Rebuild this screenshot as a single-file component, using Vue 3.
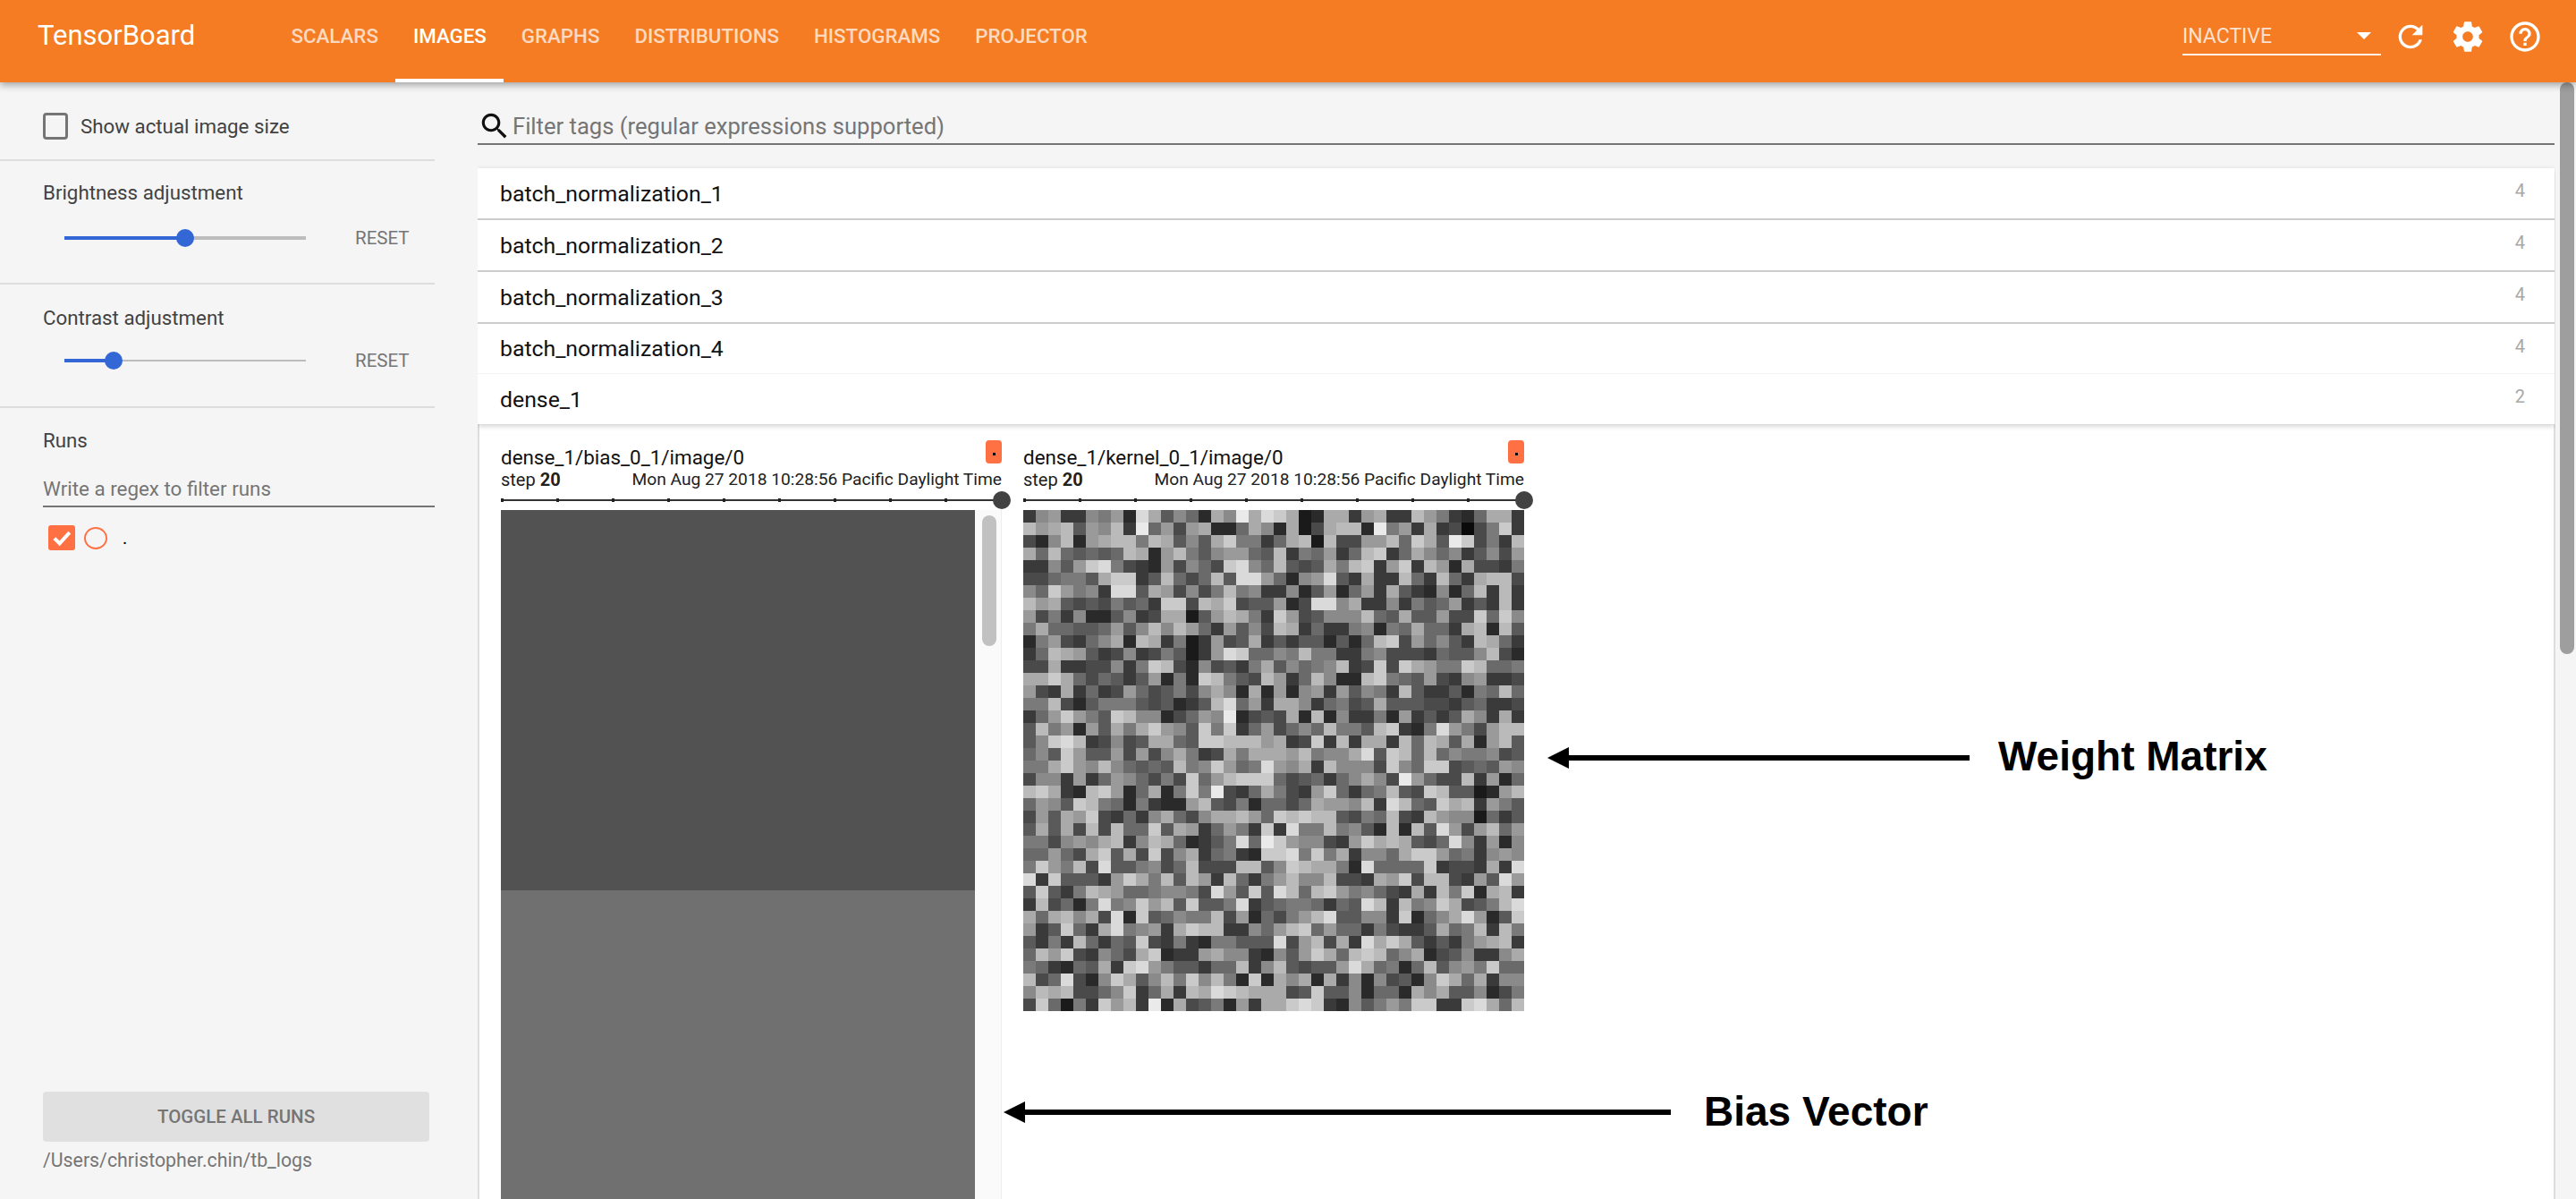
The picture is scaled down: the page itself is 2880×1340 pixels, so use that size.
<script setup>
const tabs = ['SCALARS', 'IMAGES', 'GRAPHS', 'DISTRIBUTIONS', 'HISTOGRAMS', 'PROJECTOR'];
const tags = [
  { name: 'batch_normalization_1', count: 4 },
  { name: 'batch_normalization_2', count: 4 },
  { name: 'batch_normalization_3', count: 4 },
  { name: 'batch_normalization_4', count: 4 },
  { name: 'dense_1', count: 2 }
];

// kernel image, one hex digit per cell (40 x 40)
const rows = [
  '3893387 92DA5862A8EADCA12AA39A33B97326AA3',
  'B9AB5 98B3E6949A226A82A14ABB2E793A3404 7C3',
  '428B29ABB7BA585AC7736AB1B449 9B6CA5EC4 73BC',
  'A6B65656BA29B7589965B3769 36BC36A8 6835849',
  '33859CD743294864CD86B545A7BC39C3B92A4 43',
  '446775ACC35B646B5DD96289D53A33B63B63AB B4',
  '86C9783DD5A94847B783382592693A53282 6B3B3',
  'B9A54547563CC4BAC45592 4DD8A33837569353B3',
  '947382258 34AA159BA73C94588 8B65A5594 4C6C8',
  '7A66556958B8B96 395 84BA363378276A663AB2B52',
  '27943 68A2BA37139 45A35355252 6BC496853BA63',
  '36BA95348 34751 39DC66 87B77337 84443655 8B42',
  '44A334483 7CB428 453 7A58678B34C4CA977CB667',
  'AACA64653 592 72CB754B936B822BC76594389334',
  '943A3634964574 8A82A29289395873B53352 76B6',
  '77B42577 754523 5BD693AA8367 45A555443 56334',
  '369C975CB8824 69 8E2454A2B2833729353 5A83A39',
  '5B7929 5A7AC985C7C3694 68 6B775BC3 27D974 9BB',
  '58CDB3484 5AA65CCBBB9A34C3B3AA3B6BA5A29B5',
  '685C95594 948A734A7AAA9B788AD5CB6B687784 5',
  '77AC98B8656 5B78C9 67D98A3B888 4C86CC456 598',
  '48839369864 74C69BCCC6456 368A84E96 44B39263',
  'BCA32BC926A27C7E436A74 39C6 367B54CB551 29B',
  '698 5CB76273 229B547 266 46A998B3DB65CAB3975',
  '495A9C43638A648AAB96CBCBB5476B43B9881 635',
  '5A5A4B4B66C5A9369 73C3D77B7852B2B5D949B69',
  '77489 8AB38BA623 57D6EC98843 9CABA546D8 39 28',
  '6696 4AC5A4C48A3673 2CCD7C7A38 86ACC967 3898 9',
  '7C97B4D5578 46B444BB58CBAA72D66 66C3443A3D',
  'D3C5553 9CA7B5B93B6 379B88B443A9C4BB4 395D9',
  '5C537BA96678 87 4D95C5DB6BC9786 43A3B7C2AB3',
  '3B4627D78C9B5C557D356776 365DB3B78CA457BD',
  'A6AB8A4D2C56877B492 6479BD5588 3C268AD925C',
  '935C63AD7893ACBB3386 9BC696637 4335A67B3B7',
  '5373B6365C43732775 55D49B4A3DACA535379AB3',
  '6B9C43864AC233 9A8832 859CA6BCB68A2458338A',
  '76326 5A3CD97553 66B38B5455 9DA67 26B5897C66',
  'B46D428CA58B7C8B72C2A8A2A3828452 8CA6A388',
  '8BAB44 68C36A3BADCBAAA45C55 8266 2A8A5582 47',
  '4C6173C9B3E2A457293AACDC3285 797CC33CDA6B'
];

const cells = rows.flatMap((row) =>
  row.replace(/\s/g, '').padEnd(40, '7').slice(0, 40).split('').map((ch) => {
    const v = parseInt(ch, 16) * 16 + 10;
    return `rgb(${v},${v},${v})`;
  })
);

const refreshPath = 'M17.65 6.35C16.2 4.9 14.21 4 12 4c-4.42 0-7.99 3.58-7.99 8s3.57 8 7.99 8c3.73 0 6.84-2.55 7.73-6h-2.08c-.82 2.33-3.04 4-5.65 4-3.31 0-6-2.69-6-6s2.69-6 6-6c1.66 0 3.14.69 4.22 1.78L13 11h7V4l-2.35 2.35z';
const gearPath = 'M19.43 12.98c.04-.32.07-.64.07-.98s-.03-.66-.07-.98l2.11-1.65c.19-.15.24-.42.12-.64l-2-3.46c-.12-.22-.39-.3-.61-.22l-2.49 1c-.52-.4-1.08-.73-1.69-.98l-.38-2.65C14.46 2.18 14.25 2 14 2h-4c-.25 0-.46.18-.49.42l-.38 2.65c-.61.25-1.17.59-1.69.98l-2.49-1c-.23-.09-.49 0-.61.22l-2 3.46c-.13.22-.07.49.12.64l2.11 1.65c-.04.32-.07.65-.07.98s.03.66.07.98l-2.11 1.65c-.19.15-.24.42-.12.64l2 3.46c.12.22.39.3.61.22l2.49-1c.52.4 1.08.73 1.69.98l.38 2.65c.03.24.24.42.49.42h4c.25 0 .46-.18.49-.42l.38-2.65c.61-.25 1.17-.59 1.69-.98l2.49 1c.23.09.49 0 .61-.22l2-3.46c.12-.22.07-.49-.12-.64l-2.11-1.65zM12 15.5c-1.93 0-3.5-1.57-3.5-3.5s1.57-3.5 3.5-3.5 3.5 1.57 3.5 3.5-1.57 3.5-3.5 3.5z';
const helpPath = 'M11 18h2v-2h-2v2zm1-16C6.48 2 2 6.48 2 12s4.48 10 10 10 10-4.48 10-10S17.52 2 12 2zm0 18c-4.41 0-8-3.59-8-8s3.59-8 8-8 8 3.59 8 8-3.59 8-8 8zm0-14c-2.21 0-4 1.79-4 4h2c0-1.1.9-2 2-2s2 .9 2 2c0 2-3 1.75-3 5h2c0-2.25 3-2.5 3-5 0-2.21-1.79-4-4-4z';
const searchPath = 'M15.5 14h-.79l-.28-.27C15.41 12.59 16 11.11 16 9.5 16 5.91 13.09 3 9.5 3S3 5.91 3 9.5 5.91 16 9.5 16c1.61 0 3.09-.59 4.23-1.57l.27.28v.79l5 4.99L20.49 19l-4.99-5zm-6 0C7.01 14 5 11.99 5 9.5S7.01 5 9.5 5 14 7.01 14 9.5 11.99 14 9.5 14z';
</script>

<template>
  <div class="app">
    <header class="topbar">
      <div class="logo">TensorBoard</div>
      <nav class="tabs">
        <div v-for="tab in tabs" :key="tab" class="tab" :class="{ active: tab === 'IMAGES' }">{{ tab }}</div>
      </nav>
      <div class="select">
        <span>INACTIVE</span>
        <i class="caret"></i>
      </div>
      <div class="icons">
        <svg viewBox="0 0 24 24" width="40" height="40"><path :d="refreshPath" /></svg>
        <svg viewBox="0 0 24 24" width="40" height="40"><path :d="gearPath" /></svg>
        <svg viewBox="0 0 24 24" width="40" height="40"><path :d="helpPath" /></svg>
      </div>
    </header>

    <div class="body">
      <aside class="sidebar">
        <div class="section show">
          <span class="box"></span>
          <span class="show-label">Show actual image size</span>
        </div>

        <div class="section adjust">
          <div class="label">Brightness adjustment</div>
          <div class="slider-row">
            <div class="range thick">
              <div class="range-fill bright"></div>
              <div class="range-thumb bright-thumb"></div>
            </div>
            <span class="reset">RESET</span>
          </div>
        </div>

        <div class="section adjust contrast">
          <div class="label">Contrast adjustment</div>
          <div class="slider-row">
            <div class="range">
              <div class="range-fill cont"></div>
              <div class="range-thumb cont-thumb"></div>
            </div>
            <span class="reset">RESET</span>
          </div>
        </div>

        <div class="runs">
          <div class="label">Runs</div>
          <div class="runs-filter">Write a regex to filter runs</div>
          <div class="run-item">
            <span class="run-check">
              <svg viewBox="0 0 24 24" width="28" height="28"><path d="M5 12.5l5 5L19.5 7" fill="none" stroke="#fff" stroke-width="3.4" /></svg>
            </span>
            <span class="run-circle"></span>
            <span class="run-name">.</span>
          </div>
        </div>

        <div class="bottom">
          <div class="toggle">TOGGLE ALL RUNS</div>
          <div class="logdir">/Users/christopher.chin/tb_logs</div>
        </div>
      </aside>

      <main class="main">
        <div class="filter">
          <svg viewBox="0 0 24 24" width="38" height="38"><path :d="searchPath" /></svg>
          <span>Filter tags (regular expressions supported)</span>
        </div>

        <div class="tags">
          <div v-for="tag in tags" :key="tag.name" class="tag">
            <span class="tag-name">{{ tag.name }}</span>
            <span class="tag-count">{{ tag.count }}</span>
          </div>
        </div>

        <div class="panel">
          <div class="card">
            <div class="card-head">
              <div class="card-title">dense_1/bias_0_1/image/0</div>
              <div class="chip"><i></i></div>
            </div>
            <div class="meta">
              <span class="meta-step">step <b>20</b></span>
              <span>Mon Aug 27 2018 10:28:56 Pacific Daylight Time</span>
            </div>
            <div class="step"><div class="step-thumb"></div></div>
            <div class="scroller">
              <div class="bias">
                <div class="bias-a"></div>
                <div class="bias-b"></div>
              </div>
              <div class="track"><div class="track-thumb"></div></div>
            </div>
          </div>

          <div class="card">
            <div class="card-head">
              <div class="card-title">dense_1/kernel_0_1/image/0</div>
              <div class="chip"><i></i></div>
            </div>
            <div class="meta">
              <span class="meta-step">step <b>20</b></span>
              <span>Mon Aug 27 2018 10:28:56 Pacific Daylight Time</span>
            </div>
            <div class="step"><div class="step-thumb"></div></div>
            <div class="kernel">
              <div v-for="(c, i) in cells" :key="i" :style="{ background: c }"></div>
            </div>
          </div>
        </div>
      </main>

      <div class="page-scroll"><div class="page-thumb"></div></div>
    </div>

    <!-- annotations drawn on top of the screenshot -->
    <div class="note weight-arrow"><i></i></div>
    <div class="note-text weight-text">Weight Matrix</div>
    <div class="note bias-arrow"><i></i></div>
    <div class="note-text bias-text">Bias Vector</div>
  </div>
</template>

<style>
html, body {
  margin: 0;
  background: #f5f5f5;
  overflow: hidden;
}
</style>

<style scoped>
.app {
  position: relative;
  height: 100vh;
  display: flex;
  flex-direction: column;
  font-family: Roboto, "Liberation Sans", sans-serif;
  background: #f5f5f5;
  overflow: hidden;
}

.topbar {
  height: 92px;
  flex: none;
  display: flex;
  align-items: flex-start;
  background: #f57c23;
  box-shadow: 0 3px 8px rgba(0, 0, 0, 0.35);
  position: relative;
  z-index: 3;
}

.logo {
  margin-left: 42px;
  width: 264px;
  height: 80px;
  line-height: 80px;
  font-size: 31px;
  color: #fff;
}

.tabs {
  display: flex;
  height: 92px;
}

.tab {
  padding: 0 19.5px;
  height: 80px;
  line-height: 80px;
  font-size: 22.3px;
  font-weight: 500;
  color: rgba(255, 255, 255, 0.72);
}

.tab.active {
  height: 88px;
  color: #fff;
  border-bottom: 4px solid #fff;
}

.select {
  margin-left: auto;
  margin-top: 20px;
  width: 222px;
  height: 42px;
  box-sizing: border-box;
  border-bottom: 2px solid rgba(255, 255, 255, 0.9);
  display: flex;
  align-items: center;
  justify-content: space-between;
  padding-right: 11px;
  font-size: 23px;
  color: rgba(255, 255, 255, 0.8);
}

.caret {
  width: 0;
  height: 0;
  border-left: 8px solid transparent;
  border-right: 8px solid transparent;
  border-top: 8px solid #fff;
}

.icons {
  display: flex;
  gap: 24px;
  margin: 21px 37px 0 13px;
}

.icons svg {
  fill: #fff;
  display: block;
}

.body {
  flex: 1;
  display: flex;
  min-height: 0;
}

.sidebar {
  width: 534px;
  flex: none;
  display: flex;
  flex-direction: column;
  background: #f5f5f5;
}

.section {
  width: 486px;
  border-bottom: 2px solid #dddddd;
}

.show {
  box-sizing: border-box;
  padding: 12px 0 0 48px;
  height: 88px;
  display: flex;
  align-items: center;
  gap: 14px;
}

.box {
  width: 28px;
  height: 30px;
  box-sizing: border-box;
  border: 3px solid #757575;
  border-radius: 4px;
}

.show-label {
  font-size: 22.3px;
  color: #424242;
}

.label {
  height: 32px;
  line-height: 32px;
  font-size: 22.3px;
  color: #424242;
}

.adjust {
  height: 117px;
  padding: 19px 0 0 48px;
  width: 438px;
}

.adjust.contrast {
  height: 115px;
  padding-top: 21px;
}

.slider-row {
  height: 32px;
  margin-top: 19px;
  display: flex;
  align-items: center;
  padding-left: 24px;
}

.contrast .slider-row {
  margin-top: 16px;
}

.range {
  position: relative;
  width: 270px;
  height: 2px;
  background: #bdbdbd;
}

.range.thick {
  height: 4px;
}

.range-fill {
  position: absolute;
  left: 0;
  top: 0;
  height: 4px;
  background: #3367d6;
}

.bright {
  width: 135px;
}

.cont {
  width: 55px;
  top: -1px;
}

.range-thumb {
  position: absolute;
  width: 20px;
  height: 20px;
  border-radius: 50%;
  background: #3367d6;
}

.bright-thumb {
  left: 125px;
  top: -8px;
}

.cont-thumb {
  left: 45px;
  top: -9px;
}

.reset {
  margin-left: 55px;
  color: #757575;
  font-size: 20.5px;
}

.runs {
  width: 438px;
  padding: 20px 0 0 48px;
}

.runs-filter {
  margin-top: 18px;
  height: 39px;
  line-height: 40px;
  font-size: 22.4px;
  color: #757575;
  border-bottom: 2px solid #757575;
}

.run-item {
  margin-top: 19px;
  padding-left: 6px;
  height: 30px;
  display: flex;
  align-items: center;
}

.run-check {
  width: 30px;
  height: 28px;
  border-radius: 3px;
  background: #ff7043;
  display: flex;
  align-items: center;
  justify-content: center;
}

.run-circle {
  width: 26px;
  height: 25px;
  box-sizing: border-box;
  margin-left: 10px;
  border: 2.5px solid #ff7043;
  border-radius: 50%;
}

.run-name {
  margin-left: 17px;
  font-size: 20px;
  color: #000;
}

.bottom {
  margin-top: auto;
  padding: 0 0 29px 48px;
}

.toggle {
  width: 432px;
  height: 56px;
  line-height: 56px;
  text-align: center;
  border-radius: 4px;
  background: #e0e0e0;
  color: #757575;
  font-size: 20.5px;
  font-weight: 500;
}

.logdir {
  margin-top: 7px;
  height: 28px;
  line-height: 28px;
  font-size: 21.3px;
  color: #757575;
}

.main {
  flex: 1;
  min-width: 0;
  display: flex;
  flex-direction: column;
  overflow: hidden;
  padding-right: 1px;
}

.filter {
  height: 40px;
  margin-top: 30px;
  display: flex;
  align-items: center;
  gap: 1px;
  border-bottom: 2px solid #757575;
  font-size: 25.6px;
  color: #757575;
}

.filter svg {
  fill: #111;
  flex: none;
}

.tags {
  margin-top: 26px;
  background: #fff;
  box-shadow: 0 2px 6px rgba(0, 0, 0, 0.2);
  position: relative;
  z-index: 2;
}

.tag {
  height: 56px;
  border-bottom: 2px solid #cccccc;
  display: flex;
  align-items: center;
  justify-content: space-between;
  padding: 0 33px 0 25px;
}

.tag:nth-child(4) {
  height: 55px;
  border-bottom: 1px solid #f2f2f2;
}

.tag:last-child {
  border-bottom: none;
}

.tag-name {
  font-size: 24.8px;
  color: #111;
}

.tag-count {
  padding-bottom: 6px;
  font-size: 20px;
  color: #a8a8a8;
}

.panel {
  flex: 1;
  display: flex;
  gap: 24px;
  margin-right: -1px;
  padding: 18px 0 0 24px;
  background: #fff;
  border-left: 2px solid #dddddd;
  border-right: 2px solid #dddddd;
}

.card {
  width: 560px;
  flex: none;
}

.card-head {
  display: flex;
  justify-content: space-between;
  height: 32px;
}

.card-title {
  margin-top: 5px;
  height: 28px;
  line-height: 28px;
  font-size: 22.4px;
  color: #111;
}

.chip {
  width: 18px;
  height: 26px;
  border-radius: 4px;
  background: #ff7043;
  display: flex;
  align-items: center;
  justify-content: center;
}

.chip i {
  width: 3px;
  height: 3px;
  margin-top: 4px;
  background: #000;
}

.meta {
  height: 24px;
  line-height: 24px;
  display: flex;
  justify-content: space-between;
  font-size: 19.2px;
  color: #212121;
}

.meta-step {
  font-size: 20px;
}

.step {
  position: relative;
  height: 2px;
  margin: 10px 0;
  background: #333;
}

.step::before {
  content: "";
  position: absolute;
  left: 0;
  right: 0;
  top: -1px;
  height: 4px;
  background: repeating-linear-gradient(to right, #222 0 3px, transparent 3px 62px);
}

.step-thumb {
  position: absolute;
  right: -10px;
  top: -9px;
  width: 20px;
  height: 20px;
  border-radius: 50%;
  background: #424242;
}

.scroller {
  display: flex;
}

.bias {
  width: 530px;
}

.bias-a {
  height: 425px;
  background: #525252;
}

.bias-b {
  height: 425px;
  background: #707070;
}

.track {
  flex: 1;
  box-sizing: border-box;
  padding: 6px 0 0 8px;
  background: #fafafa;
  border-right: 1px solid #eeeeee;
}

.track-thumb {
  width: 16px;
  height: 146px;
  border-radius: 8px;
  background: #c1c1c1;
}

.kernel {
  width: 560px;
  height: 560px;
  display: grid;
  grid-template-columns: repeat(40, 14px);
  grid-auto-rows: 14px;
}

.page-scroll {
  width: 23px;
  flex: none;
  box-sizing: border-box;
  padding-left: 5px;
}

.page-thumb {
  width: 16px;
  height: 639px;
  border-radius: 8px;
  background: #9e9e9e;
}

.note {
  position: absolute;
  height: 6px;
  background: #000;
  z-index: 4;
}

.note i {
  position: absolute;
  right: 100%;
  top: -9px;
  width: 0;
  height: 0;
  border-top: 12px solid transparent;
  border-bottom: 12px solid transparent;
  border-right: 24px solid #000;
}

.weight-arrow {
  left: 1754px;
  top: 844px;
  width: 448px;
}

.bias-arrow {
  left: 1146px;
  top: 1240px;
  width: 722px;
}

.note-text {
  position: absolute;
  z-index: 4;
  font-family: "Liberation Sans", Arial, sans-serif;
  font-weight: 700;
  font-size: 46px;
  line-height: 54px;
  color: #000;
  white-space: nowrap;
}

.weight-text {
  left: 2234px;
  top: 818px;
}

.bias-text {
  left: 1905px;
  top: 1215px;
}
</style>
